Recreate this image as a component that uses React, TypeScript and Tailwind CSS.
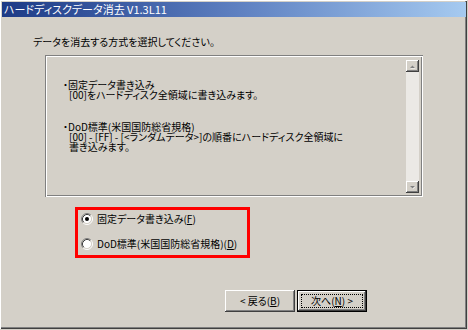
const bevelOut =
  "shadow-[inset_-1px_-1px_#404040,inset_1px_1px_#ffffff,inset_-2px_-2px_#808080,inset_2px_2px_#d4d0c8]";

function Radio({ checked }: { checked?: boolean }) {
  return (
    <svg width="12" height="12" viewBox="0 0 12 12" className="shrink-0">
      <circle cx="6" cy="6" r="4.5" fill="#ffffff" />
      <path d="M2.11 9.89 A5.5 5.5 0 0 1 9.89 2.11" fill="none" stroke="#808080" strokeWidth="1" />
      <path d="M9.89 2.11 A5.5 5.5 0 0 1 2.11 9.89" fill="none" stroke="#ffffff" strokeWidth="1" />
      <path d="M2.82 9.18 A4.5 4.5 0 0 1 9.18 2.82" fill="none" stroke="#404040" strokeWidth="1" />
      <path d="M9.18 2.82 A4.5 4.5 0 0 1 2.82 9.18" fill="none" stroke="#d4d0c8" strokeWidth="1" />
      {checked && <circle cx="6" cy="6" r="2" fill="#000000" />}
    </svg>
  );
}

function ArrowBtn({ up }: { up?: boolean }) {
  return (
    <div className={`h-[12px] w-full flex items-center justify-center bg-[#d4d0c8] ${bevelOut}`}>
      <svg width="7" height="5" viewBox="0 0 7 5">
        {up ? (
          <>
            <path d="M1 4h5L3.5 1.5z" fill="#ffffff" transform="translate(0.5 0.5)" />
            <path d="M1 4h5L3.5 1.5z" fill="#808080" />
          </>
        ) : (
          <>
            <path d="M1 1h5L3.5 3.5z" fill="#ffffff" transform="translate(0.5 0.5)" />
            <path d="M1 1h5L3.5 3.5z" fill="#808080" />
          </>
        )}
      </svg>
    </div>
  );
}

export default function App() {
  return (
    <div className="w-[468px] h-[330px] bg-[#d4d0c8] overflow-hidden font-['Noto_Sans_CJK_JP',sans-serif] [font-feature-settings:'palt'] text-[10px] text-black">
      <div className="w-[467px] h-[329px] flex flex-col shadow-[inset_1px_1px_#ffffff,inset_-1px_-1px_#404040,inset_-2px_-2px_#808080]">
        {/* title bar */}
        <div className="px-[2px] pt-[2px]">
          <div className="h-[15px] w-[464px] bg-gradient-to-r from-[#1d3a86] via-[#5d7fc0] to-[#a6caf0] text-white text-[11px] leading-[15px] pl-[2px] whitespace-nowrap">
            ハードディスクデータ消去 V1.3L11
          </div>
        </div>

        <p className="mt-[19px] ml-[33px] leading-[12px] whitespace-nowrap">
          データを消去する方式を選択してください。
        </p>

        {/* description box */}
        <div className="mt-[7px] ml-[45px] w-[378px] h-[142px] flex shadow-[inset_1px_1px_#808080,inset_2px_2px_#ffffff,inset_-1px_-1px_#ffffff,inset_-2px_-2px_#808080]">
          <div className="flex-1 pl-[18px] pt-[25px] leading-[10px] whitespace-nowrap">
            <p>・固定データ書き込み</p>
            <p className="pl-[6px]">[00]をハードディスク全領域に書き込みます。</p>
            <p className="mt-[22px]">・DoD標準(米国国防総省規格)</p>
            <p className="pl-[6px]">[00] - [FF] - [&lt;ランダムデータ&gt;]の順番にハードディスク全領域に</p>
            <p className="pl-[6px]">書き込みます。</p>
          </div>
          <div className="w-[13px] mt-[5px] mb-[4px] mr-[4px] flex flex-col">
            <ArrowBtn up />
            <div className="flex-1 bg-[#ebe9e5]" />
            <ArrowBtn />
          </div>
        </div>

        {/* options */}
        <div className="mt-[10px] ml-[75px] w-[175px] h-[51px] border-[3px] border-[#ff0000] pt-[2px] pl-[3px] flex flex-col gap-[12px]">
          <div className="flex items-center gap-[4px] h-[13px] leading-[13px] whitespace-nowrap">
            <Radio checked />
            <span>
              固定データ書き込み(<span className="underline">F</span>)
            </span>
          </div>
          <div className="flex items-center gap-[4px] h-[13px] leading-[13px] whitespace-nowrap">
            <Radio />
            <span>
              DoD標準(米国国防総省規格)(<span className="underline">D</span>)
            </span>
          </div>
        </div>

        {/* buttons */}
        <div className="mt-[32px] ml-[225px] flex gap-[2px]">
          <button className={`w-[70px] h-[22px] bg-[#d4d0c8] flex items-center justify-center leading-[12px] ${bevelOut}`}>
            &lt; 戻る(<span className="underline">B</span>)
          </button>
          <div className="w-[70px] h-[22px] border border-black">
            <button className={`w-full h-full bg-[#d4d0c8] flex items-center justify-center p-[3px] ${bevelOut}`}>
              <span className="w-full h-full border border-dotted border-black flex items-center justify-center leading-[12px]">
                次へ(<span className="underline">N</span>) &gt;
              </span>
            </button>
          </div>
        </div>
      </div>
    </div>
  );
}
